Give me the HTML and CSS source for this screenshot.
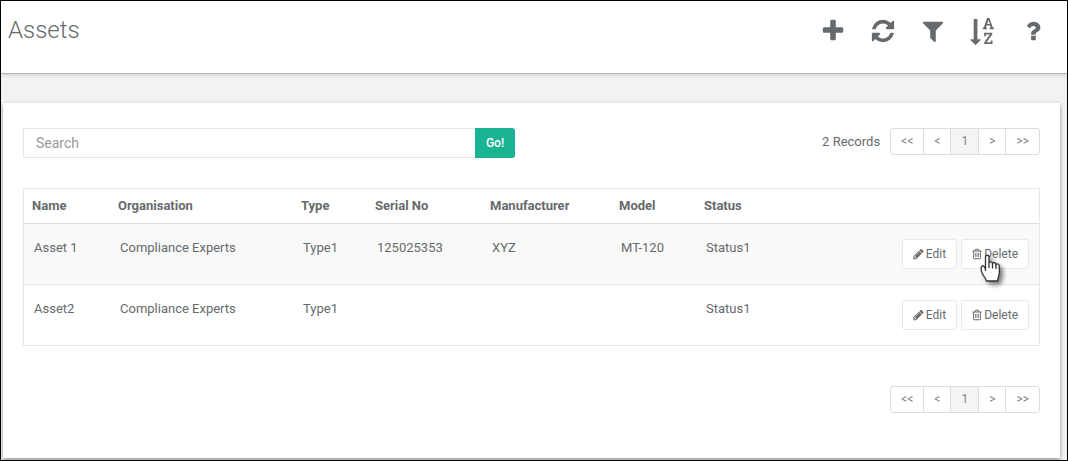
FILE: index.html
```html
<!DOCTYPE html>
<html lang="en">
<head>
<meta charset="utf-8">
<meta name="viewport" content="width=device-width, initial-scale=1">
<title>Assets</title>
<link rel="stylesheet" href="styles.css">
</head>
<body>
<svg class="sprite" aria-hidden="true">
  <symbol id="pencil" viewBox="128 0 1536 1792"><path d="M491 1536l91-91-235-235-91 91v107h128v128h107zm523-928q0-22-22-22-10 0-17 7l-542 542q-7 7-7 17 0 22 22 22 10 0 17-7l542-542q7-7 7-17zm-54-192l416 416-832 832h-416v-416zm683 96q0 53-37 90l-166 166-416-416 166-165q36-38 90-38 53 0 91 38l235 234q37 39 37 91z"/></symbol>
  <symbol id="trash" viewBox="192 0 1408 1792"><path d="M704 736v576q0 14-9 23t-23 9h-64q-14 0-23-9t-9-23v-576q0-14 9-23t23-9h64q14 0 23 9t9 23zm256 0v576q0 14-9 23t-23 9h-64q-14 0-23-9t-9-23v-576q0-14 9-23t23-9h64q14 0 23 9t9 23zm256 0v576q0 14-9 23t-23 9h-64q-14 0-23-9t-9-23v-576q0-14 9-23t23-9h64q14 0 23 9t9 23zm128 724v-948h-896v948q0 22 7 40.500t14.500 27 10.500 8.500h832q3 0 10.500-8.500t14.500-27 7-40.500zm-672-1076h448l-48-117q-7-9-17-11h-317q-10 2-17 11zm928 32v64q0 14-9 23t-23 9h-96v948q0 83-47 143.500t-113 60.500h-832q-66 0-113-58.500t-47-141.500v-952h-96q-14 0-23-9t-9-23v-64q0-14 9-23t23-9h309l70-167q15-37 54-63t79-26h320q40 0 79 26t54 63l70 167h309q14 0 23 9t9 23z"/></symbol>
</svg>
<div class="page">
  <header class="topbar">
    <h1 class="title">Assets</h1>
    <div class="tools">
      <button class="tool" type="button" aria-label="Add"><svg viewBox="0 0 1792 1792"><path d="M1600 736v192q0 40-28 68t-68 28h-416v416q0 40-28 68t-68 28h-192q-40 0-68-28t-28-68v-416h-416q-40 0-68-28t-28-68v-192q0-40 28-68t68-28h416v-416q0-40 28-68t68-28h192q40 0 68 28t28 68v416h416q40 0 68 28t28 68z"/></svg></button>
      <button class="tool" type="button" aria-label="Refresh"><svg viewBox="0 0 1792 1792"><path d="M1639 1056q0 5-1 7-64 268-268 434.500t-478 166.500q-146 0-282.500-55t-243.500-157l-129 129q-19 19-45 19t-45-19-19-45v-448q0-26 19-45t45-19h448q26 0 45 19t19 45-19 45l-137 137q71 66 161 102t187 36q134 0 250-65t186-179q11-17 53-117 8-23 30-23h192q13 0 22.500 9.500t9.500 22.500zm25-800v448q0 26-19 45t-45 19h-448q-26 0-45-19t-19-45 19-45l138-138q-148-137-349-137-134 0-250 65t-186 179q-11 17-53 117-8 23-30 23h-199q-13 0-22.500-9.500t-9.500-22.500v-7q65-268 270-434.500t480-166.500q146 0 284 55.500t245 156.500l130-129q19-19 45-19t45 19 19 45z"/></svg></button>
      <button class="tool" type="button" aria-label="Filter"><svg viewBox="0 0 1792 1792"><path d="M1595 295q17 41-14 70l-493 493v742q0 42-39 59-13 5-25 5-27 0-45-19l-256-256q-19-19-19-45v-486l-493-493q-31-29-14-70 17-39 59-39h1280q42 0 59 39z"/></svg></button>
      <button class="tool" type="button" aria-label="Sort"><svg viewBox="0 0 1792 1792"><path d="M1191 408h177l-72-218-12-47q-2-16-2-20h-4l-3 20q0 1-3.500 18t-7.500 29zm-455 1096q0 12-10 24l-319 319q-10 9-23 9-12 0-23-9l-320-320q-15-16-7-35 8-20 30-20h192v-1376q0-14 9-23t23-9h192q14 0 23 9t9 23v1376h192q14 0 23 9t9 23zm817 55v233h-584v-90l369-529q12-18 21-27l11-9v-3q-2 0-6.500.5t-7.500.5q-12 3-30 3h-232v115h-120v-229h567v89l-369 530q-6 8-21 26l-11 11v2l14-2q9-2 30-2h248v-119h121zm89-897v106h-288v-106h75l-47-144h-243l-47 144h75v106h-287v-106h70l230-662h162l230 662h70z"/></svg></button>
      <button class="tool" type="button" aria-label="Help"><svg viewBox="0 0 1792 1792"><path d="M1088 1256v240q0 16-12 28t-28 12h-240q-16 0-28-12t-12-28v-240q0-16 12-28t28-12h240q16 0 28 12t12 28zm316-600q0 54-15.500 101t-35 76.500-55 59.500-57.500 43.500-61 35.500q-41 23-68.500 65t-27.500 67q0 17-12 32.500t-28 15.500h-240q-15 0-25.500-18.500t-10.500-37.500v-45q0-83 65-156.500t143-108.500q59-27 84-56t25-76q0-42-46.500-74t-107.500-32q-65 0-108 29-35 25-107 115-13 16-31 16-12 0-25-8l-164-125q-13-10-15.500-25t5.500-28q160-266 464-266 80 0 161 31t146 83 106 127.500 41 158.500z"/></svg></button>
    </div>
  </header>
  <main class="card">
    <div class="controls">
      <form class="search" role="search">
        <input class="search-input" type="text" placeholder="Search" aria-label="Search">
        <button class="go" type="button">Go!</button>
      </form>
      <div class="paging">
        <span>2 Records</span>
        <nav class="pager" aria-label="Pages, top">
          <a href="#">&lt;&lt;</a><a href="#">&lt;</a><a class="current" href="#" aria-current="page">1</a><a href="#">&gt;</a><a href="#">&gt;&gt;</a>
        </nav>
      </div>
    </div>
    <table class="assets">
      <colgroup><col class="c-name"><col class="c-org"><col class="c-type"><col class="c-serial"><col class="c-maker"><col class="c-model"><col class="c-status"><col></colgroup>
      <thead>
        <tr><th>Name</th><th>Organisation</th><th>Type</th><th>Serial No</th><th>Manufacturer</th><th>Model</th><th>Status</th><td></td></tr>
      </thead>
      <tbody>
        <tr>
          <td>Asset 1</td><td>Compliance Experts</td><td>Type1</td><td>125025353</td><td>XYZ</td><td>MT-120</td><td>Status1</td>
          <td><div class="actions">
            <button class="action" type="button"><svg class="pencil"><use href="#pencil"/></svg>Edit</button>
            <button class="action" type="button"><svg class="trash"><use href="#trash"/></svg>Delete
              <svg class="pointer" viewBox="0 0 30 36" aria-hidden="true">
                <path class="pointer-hand" d="M6.500 19V4.500C6.500 2.800 10 2.800 10 4.500V11C10.500 9.300 13.300 9.700 13.500 11.500C14.300 10 17 10.500 17 12.500C18 11.200 20.300 12 20.300 14V21C20.300 23.500 19 25 18.500 29H7.500C7 26 3 22.500 2.500 19.500C2 16.500 1.500 14.500 3.500 14C5 13.700 6 15.500 6.500 17.500"/>
                <path class="pointer-lines" d="M10 10.500V16M13.500 11.500V16.500M17 12.500V17"/>
              </svg>
            </button>
          </div></td>
        </tr>
        <tr>
          <td>Asset2</td><td>Compliance Experts</td><td>Type1</td><td></td><td></td><td></td><td>Status1</td>
          <td><div class="actions">
            <button class="action" type="button"><svg class="pencil"><use href="#pencil"/></svg>Edit</button>
            <button class="action" type="button"><svg class="trash"><use href="#trash"/></svg>Delete</button>
          </div></td>
        </tr>
      </tbody>
    </table>
    <nav class="pager" aria-label="Pages, bottom">
      <a href="#">&lt;&lt;</a><a href="#">&lt;</a><a class="current" href="#" aria-current="page">1</a><a href="#">&gt;</a><a href="#">&gt;&gt;</a>
    </nav>
  </main>
</div>
</body>
</html>
```
FILE: styles.css
```css
* { box-sizing: border-box; }

body {
  margin: 0;
  font: 13px/18px Roboto, "Liberation Sans", sans-serif;
  color: #676a6c;
}

button, input { font: inherit; color: inherit; }
svg { fill: currentColor; overflow: visible; }
.sprite { display: none; }

.page {
  display: flex;
  flex-direction: column;
  min-height: 100vh;
  border: 1px solid #000;
  background: #f2f2f2;
  overflow: hidden;
}

.topbar {
  display: flex;
  justify-content: space-between;
  align-items: flex-start;
  padding: 12px 21px 26px 7px;
  background: #fff;
  border-bottom: 1px solid #b2b2b2;
  box-shadow: 0 1px 4px rgba(0, 0, 0, 0.15);
}

.title {
  margin: 0;
  font-size: 24px;
  line-height: 34px;
  font-weight: 300;
}

.tools {
  display: flex;
  gap: 24px;
  padding-top: 5px;
}

.tool {
  display: block;
  width: 26px;
  height: 26px;
  padding: 0;
  border: 0;
  background: none;
}

.tool svg { display: block; width: 26px; height: 26px; }

.card {
  display: flex;
  flex-direction: column;
  flex: 1;
  margin: 29px 7px 2px 2px;
  padding: 25px 20px 20px;
  background: #fff;
  box-shadow: 0 2px 4px rgba(0, 0, 0, 0.4);
}

.controls {
  display: flex;
  justify-content: space-between;
  align-items: flex-start;
  margin-bottom: 30px;
}

.search { display: flex; width: 492px; }

.search-input {
  flex: 1;
  min-width: 0;
  height: 30px;
  padding: 0 12px;
  font-size: 14px;
  border: 1px solid #e5e6e7;
  border-right: 0;
  border-radius: 1px 0 0 1px;
}

.search-input::placeholder { color: #999; opacity: 1; }

.go {
  width: 40px;
  padding: 0;
  border: 0;
  border-radius: 0 3px 3px 0;
  background: #1ab394;
  color: #fff;
  font-size: 12px;
  font-weight: 500;
}

.paging { display: flex; align-items: center; gap: 10px; }

.pager {
  display: flex;
  align-self: flex-end;
  border: 1px solid #ddd;
  border-radius: 3px;
  overflow: hidden;
}

.pager a {
  padding: 3px 10px 4px;
  font-size: 12px;
  color: #808284;
  text-decoration: none;
}

.pager a + a { border-left: 1px solid #ddd; }
.pager .current { background: #f4f4f4; }

.assets {
  width: 100%;
  margin-bottom: 40px;
  table-layout: fixed;
  border-spacing: 0;
  border: 1px solid #e7e7e7;
}

.c-name { width: 86px; }
.c-org { width: 183px; }
.c-type { width: 74px; }
.c-serial { width: 115px; }
.c-maker { width: 129px; }
.c-model { width: 85px; }
.c-status { width: 85px; }

.assets th {
  padding: 8px;
  text-align: left;
  font-weight: 700;
}

.assets thead th, .assets thead td { border-bottom: 1px solid #ddd; }

.assets tbody td {
  padding: 15px 10px;
  vertical-align: top;
}

.assets tbody tr:first-child { background: #f9f9f9; }
.assets tbody tr + tr td { border-top: 1px solid #e7e7e7; }

.actions { display: flex; justify-content: flex-end; gap: 4px; }

.action {
  position: relative;
  display: flex;
  align-items: center;
  gap: 2px;
  height: 30px;
  padding: 0 10px;
  border: 1px solid #e7eaec;
  border-radius: 3px;
  background: #fff;
  font-size: 12px;
}

.pencil { width: 11px; height: 12px; }
.trash { width: 10px; height: 12px; }

.pointer {
  position: absolute;
  left: 17px;
  top: 12px;
  width: 30px;
  height: 36px;
  filter: drop-shadow(3px 3px 2px rgba(0, 0, 0, 0.5));
}

.pointer-hand { fill: #fff; stroke: #333; stroke-width: 1.3; }
.pointer-lines { fill: none; stroke: #333; stroke-width: 1.3; }
```
